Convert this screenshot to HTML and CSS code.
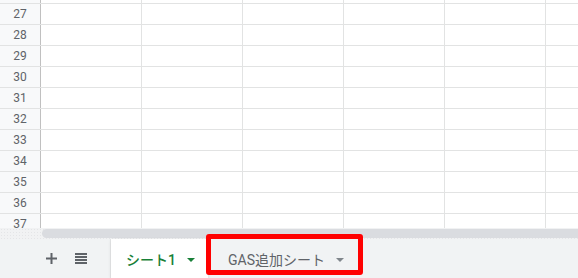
FILE: index.html
```html
<!DOCTYPE html>
<html>
<head>
<meta name="viewport" content="width=device-width, initial-scale=1">
<link rel="stylesheet" href="styles.css">
</head>
<body>

<div class="grid">
  <div class="row top">
    <div class="head"></div>
    <div class="cell"></div><div class="cell"></div><div class="cell"></div><div class="cell"></div><div class="cell"></div><div class="cell"></div>
  </div>
  <div class="row"><div class="head">27</div><div class="cell"></div><div class="cell"></div><div class="cell"></div><div class="cell"></div><div class="cell"></div><div class="cell"></div></div>
  <div class="row"><div class="head">28</div><div class="cell"></div><div class="cell"></div><div class="cell"></div><div class="cell"></div><div class="cell"></div><div class="cell"></div></div>
  <div class="row"><div class="head">29</div><div class="cell"></div><div class="cell"></div><div class="cell"></div><div class="cell"></div><div class="cell"></div><div class="cell"></div></div>
  <div class="row"><div class="head">30</div><div class="cell"></div><div class="cell"></div><div class="cell"></div><div class="cell"></div><div class="cell"></div><div class="cell"></div></div>
  <div class="row"><div class="head">31</div><div class="cell"></div><div class="cell"></div><div class="cell"></div><div class="cell"></div><div class="cell"></div><div class="cell"></div></div>
  <div class="row"><div class="head">32</div><div class="cell"></div><div class="cell"></div><div class="cell"></div><div class="cell"></div><div class="cell"></div><div class="cell"></div></div>
  <div class="row"><div class="head">33</div><div class="cell"></div><div class="cell"></div><div class="cell"></div><div class="cell"></div><div class="cell"></div><div class="cell"></div></div>
  <div class="row"><div class="head">34</div><div class="cell"></div><div class="cell"></div><div class="cell"></div><div class="cell"></div><div class="cell"></div><div class="cell"></div></div>
  <div class="row"><div class="head">35</div><div class="cell"></div><div class="cell"></div><div class="cell"></div><div class="cell"></div><div class="cell"></div><div class="cell"></div></div>
  <div class="row"><div class="head">36</div><div class="cell"></div><div class="cell"></div><div class="cell"></div><div class="cell"></div><div class="cell"></div><div class="cell"></div></div>
  <div class="row"><div class="head">37</div><div class="cell"></div><div class="cell"></div><div class="cell"></div><div class="cell"></div><div class="cell"></div><div class="cell"></div></div>
</div>

<div class="scroll">
  <div class="scroll-corner"></div>
  <div class="thumb"></div>
</div>

<div class="tabbar">
  <div class="tools">
    <button class="tool" type="button">
      <svg width="11" height="11" viewBox="0 0 11 11"><path d="M5.5 0v11M0 5.5h11" stroke="#5f6368" stroke-width="2"/></svg>
    </button>
    <button class="tool" type="button">
      <svg width="12" height="11" viewBox="0 0 12 11"><path d="M0 1h12M0 4h12M0 7h12M0 10h12" stroke="#5f6368" stroke-width="2"/></svg>
    </button>
  </div>
  <div class="tab active">
    <span>シート1</span>
    <span class="caret"></span>
  </div>
  <div class="tab">
    <span>GAS追加シート</span>
    <span class="caret"></span>
    <div class="mark"></div>
  </div>
</div>

</body>
</html>
```

FILE: styles.css
```css
body {
    margin: 0;
    font-family: Roboto, "Noto Sans CJK JP", sans-serif;
    width: 578px;
    height: 278px;
    overflow: hidden;
    background: #fff;
}

.grid {
    height: 228px;
    overflow: hidden;
}

.row {
    display: flex;
    height: 20px;
    border-bottom: 1px solid #e2e3e3;
}

.row.top {
    height: 3px;
}

.head {
    flex: none;
    width: 40px;
    background: #f8f9fa;
    border-right: 1px solid #c0c0c0;
    color: #5f6368;
    font-size: 12px;
    line-height: 21px;
    text-align: center;
}

.cell {
    flex: none;
    width: 100px;
    border-right: 1px solid #e2e3e3;
}

.scroll {
    display: flex;
    align-items: center;
    height: 11px;
    background-color: #f1f2f3;
    background-image: radial-gradient(#e4e5e7 0.6px, transparent 0.7px);
    background-size: 3px 3px;
}

.scroll-corner {
    width: 42px;
    flex: none;
}

.thumb {
    flex: 1;
    height: 9px;
    background: #dadce0;
    border-radius: 5px 0 0 5px;
}

.tabbar {
    display: flex;
    height: 39px;
    background: #f1f3f4;
}

.tools {
    display: flex;
    align-items: center;
    width: 111px;
    padding-left: 40px;
    box-sizing: border-box;
    gap: 8px;
    border-right: 1px solid #e6e7e8;
}

.tool {
    display: flex;
    align-items: center;
    justify-content: center;
    width: 22px;
    height: 22px;
    padding: 0;
    border: none;
    background: none;
}

.tab {
    position: relative;
    display: flex;
    align-items: center;
    gap: 11px;
    height: 39px;
    padding: 0 17px 0 20px;
    color: #5f6368;
    font-size: 14px;
}

.tab.active {
    background: #fff;
    color: #188038;
    font-weight: 500;
    padding: 0 13px 0 15px;
    box-shadow: 0 1px 3px rgba(60, 64, 67, 0.15);
}

.caret {
    width: 0;
    height: 0;
    border-left: 4px solid transparent;
    border-right: 4px solid transparent;
    border-top: 4px solid #80868b;
    margin-top: 2px;
}

.tab.active .caret {
    border-top-color: #188038;
}

.mark {
    position: absolute;
    left: -2px;
    top: -5px;
    width: 147px;
    height: 31px;
    border: 5px solid #ff0000;
    border-radius: 3px;
}
```
